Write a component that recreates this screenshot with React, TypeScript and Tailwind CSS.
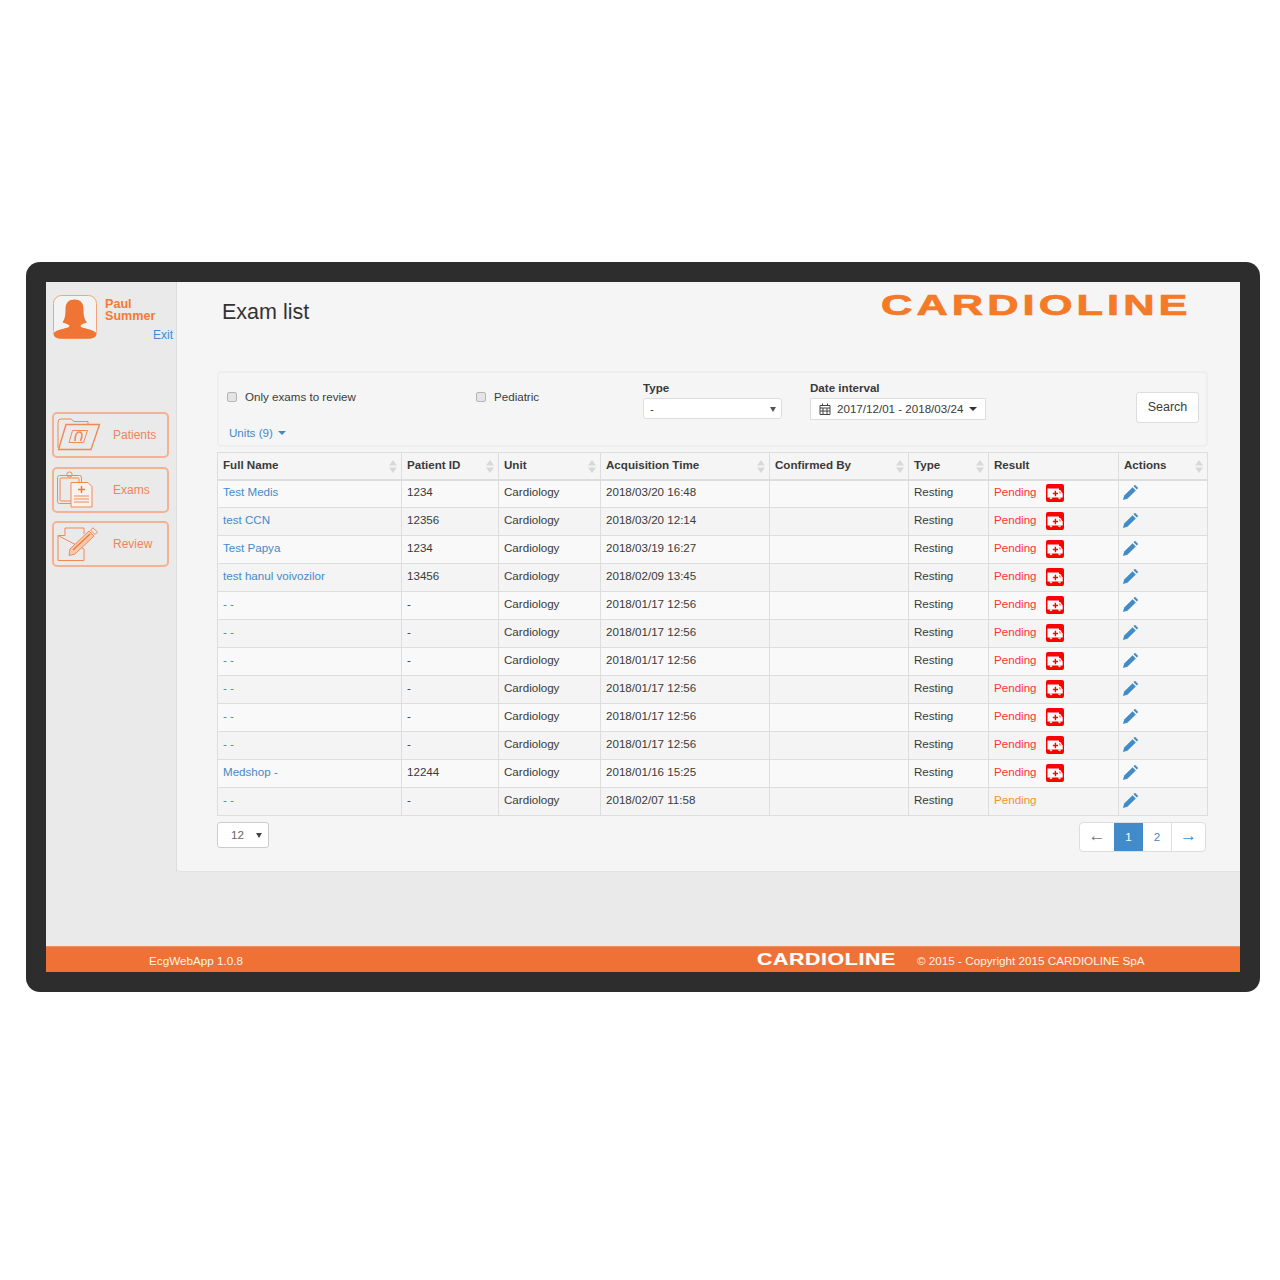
import React from 'react';

const rows = [
  { name: 'Test Medis', id: '1234', time: '2018/03/20 16:48' },
  { name: 'test CCN', id: '12356', time: '2018/03/20 12:14' },
  { name: 'Test Papya', id: '1234', time: '2018/03/19 16:27' },
  { name: 'test hanul voivozilor', id: '13456', time: '2018/02/09 13:45' },
  { name: '- -', id: '-', time: '2018/01/17 12:56' },
  { name: '- -', id: '-', time: '2018/01/17 12:56' },
  { name: '- -', id: '-', time: '2018/01/17 12:56' },
  { name: '- -', id: '-', time: '2018/01/17 12:56' },
  { name: '- -', id: '-', time: '2018/01/17 12:56' },
  { name: '- -', id: '-', time: '2018/01/17 12:56' },
  { name: 'Medshop -', id: '12244', time: '2018/01/16 15:25' },
  { name: '- -', id: '-', time: '2018/02/07 11:58', urgent: false },
];

const columns = [
  { label: 'Full Name', width: 'w-[184px]', sort: true },
  { label: 'Patient ID', width: 'w-[97px]', sort: true },
  { label: 'Unit', width: 'w-[102px]', sort: true },
  { label: 'Acquisition Time', width: 'w-[169px]', sort: true },
  { label: 'Confirmed By', width: 'w-[139px]', sort: true },
  { label: 'Type', width: 'w-[80px]', sort: true },
  { label: 'Result', width: 'w-[130px]', sort: false },
  { label: 'Actions', width: 'w-[89px]', sort: true },
];

const SortIcon = () => (
  <svg width="8" height="13" viewBox="0 0 8 13" className="absolute right-[4px] top-[7px]">
    <path d="M4 0 L8 5.5 H0 Z M4 13 L0 7.5 H8 Z" fill="#d8d8d8" />
  </svg>
);

const Ambulance = () => (
  <svg width="18" height="18" viewBox="0 0 18 18" className="block">
    <rect width="18" height="18" rx="2" fill="#ff0000" />
    <path d="M1.5 4.5 H13 V6 H14.2 L16.7 9.5 V13.5 H1.5 Z" fill="#ffffff" />
    <path d="M8.7 6.8 H10.1 V8.8 H12 V10.2 H10.1 V12.2 H8.7 V10.2 H6.8 V8.8 H8.7 Z" fill="#ff0000" />
    <path d="M13.2 7 H14 L15.4 9.5 H13.2 Z" fill="#ff8080" />
    <circle cx="5" cy="14" r="1.3" fill="#ffd0d0" />
    <circle cx="13.5" cy="14" r="1.3" fill="#ffd0d0" />
  </svg>
);

const PencilIcon = () => (
  <svg width="15" height="15" viewBox="0 0 15 15" className="block">
    <path d="M0 15 L1.2 10.6 L9.6 2.2 L12.8 5.4 L4.4 13.8 Z" fill="#428bca" />
    <path d="M10.6 1.2 L11.6 0.2 Q12 0 12.4 0.2 L14.8 2.6 Q15 3 14.8 3.4 L13.8 4.4 Z" fill="#428bca" />
  </svg>
);

const Avatar = () => (
  <svg width="44" height="44" viewBox="0 0 44 44" className="block">
    <rect x="0.5" y="0.5" width="43" height="43" rx="8" fill="#f3f3f3" stroke="#f2a47c" />
    <path
      d="M12.5 14 C12.5 7.5 16 4.5 21.5 4.5 C27 4.5 30.5 7.5 30.5 14 C30.5 20 31 24 34 27.5 L29.5 29 L27.5 30.5 L28 32 C33 34 41 34.5 43.5 38.5 C43.5 41.5 41 43.5 36 43.5 H8 C3 43.5 0.5 41.5 0.5 38.5 C3 34.5 11 34 16 32 L16.5 30.5 L14 29 L9.5 27.5 C12 24 12.5 20 12.5 14 Z"
      fill="#f07434"
    />
  </svg>
);

const FolderIcon = () => (
  <svg width="44" height="34" viewBox="0 0 44 34" fill="none" stroke="#f08a55" className="block">
    <path d="M1 30 V4 Q1 1 4 1 H14 L17 3.5 H31 V7" strokeWidth="1" />
    <path d="M9 6.5 H42.5 L34 31.5 H1.5 Z" strokeWidth="1.4" />
    <path d="M15.5 12.5 H30.5 L26.5 24.5 H12 Z" strokeWidth="1" />
    <path d="M18 23 C18 16.5 20 14 22.5 14 C25.5 14 25.5 18 23.5 23" strokeWidth="1.6" />
  </svg>
);

const ClipboardIcon = () => (
  <svg width="36" height="37" viewBox="0 0 36 37" fill="none" stroke="#f08a55" className="block">
    <rect x="0.5" y="4.5" width="24" height="28" rx="2" strokeWidth="1" />
    <rect x="3" y="7" width="19" height="23" rx="1" strokeWidth="1" />
    <circle cx="12.5" cy="3.5" r="2.6" strokeWidth="1" />
    <path d="M14 11.5 H31 L35 15.5 V36 H14 Z" fill="#f7f2ef" strokeWidth="1" />
    <path d="M24.5 15 V22 M21 18.5 H28" stroke="#f07434" strokeWidth="1.4" />
    <path d="M17 25 H32 M17 28 H32 M17 31 H32" strokeWidth="1" />
  </svg>
);

const ReviewIcon = () => (
  <svg width="41" height="35" viewBox="0 0 41 35" fill="none" stroke="#f08a55" className="block">
    <path d="M8 1 H27 V7 M27 22 V33.5 H1 V8.5 Z" strokeWidth="1" />
    <path d="M1 8.5 H8 V1" strokeWidth="1" />
    <path d="M13 22 L32 4 L37 9 L18 27 L12 28.5 Z" strokeWidth="1" fill="#f9c9ad" />
    <path d="M16 23 L33 7" stroke="#f07434" strokeWidth="1.2" />
    <path d="M33.5 3 L36 0.8 L40.5 5 L38 7.5 Z" strokeWidth="1" />
  </svg>
);

// natural-size text inside a narrower viewBox, stretched sideways like the wordmark
const Logo = ({ width, height, viewW, size, spacing, weight, color }: { width: number; height: number; viewW: number; size: number; spacing: number; weight: number; color: string }) => (
  <svg width={width} height={height} viewBox={`0 0 ${viewW} ${height}`} preserveAspectRatio="none" className="block overflow-visible">
    <text
      x="0"
      y={height}
      letterSpacing={spacing}
      fontFamily="'Liberation Sans', Arial, sans-serif"
      fontWeight="700"
      fontSize={size}
      fill={color}
      stroke={color}
      strokeWidth={weight}
    >
      CARDIOLINE
    </text>
  </svg>
);

const NavButton = ({ icon, label }: { icon: React.ReactNode; label: string }) => (
  <div className="flex items-center h-[46px] w-[117px] border-2 border-[#f3b293] rounded-[5px] pl-[3px]">
    <div className="w-[56px] flex-shrink-0">{icon}</div>
    <span className="text-[12px] text-[#f0845a]">{label}</span>
  </div>
);

const Caret = ({ className }: { className: string }) => (
  <span className={`inline-block w-0 h-0 border-x-[4px] border-x-transparent border-t-[4px] ${className}`} />
);

export default function App() {
  return (
    <div className="w-[1280px] h-[1280px] bg-white pt-[262px] pl-[26px] font-['Liberation_Sans',Arial,sans-serif] text-[11.6px] text-[#3a3a3a]">
      <div className="w-[1234px] h-[730px] bg-[#2d2d2d] rounded-[14px] p-[20px]">
        <div className="h-[690px] flex flex-col bg-[#eaeaea]">
          <div className="flex h-[664px]">
            {/* Sidebar */}
            <div className="w-[131px] flex-shrink-0 pl-[6px] pt-[13px] border-r border-[#dddddd] h-[590px]">
              <div className="flex h-[117px] pl-[1px]">
                <Avatar />
                <div className="ml-[8px] flex-1 pr-[3px]">
                  <div className="font-bold text-[12.6px] leading-[12px] text-[#f47a33] pt-[3px]">
                    Paul
                    <br />
                    Summer
                  </div>
                  <div className="text-right text-[12px] text-[#428bca] mt-[6px] leading-[14px]">Exit</div>
                </div>
              </div>
              <div className="flex flex-col gap-[8.5px]">
                <NavButton icon={<FolderIcon />} label="Patients" />
                <NavButton icon={<ClipboardIcon />} label="Exams" />
                <NavButton icon={<ReviewIcon />} label="Review" />
              </div>
            </div>

            {/* Main */}
            <div className="w-[1063px] h-[590px] bg-[#f5f5f5] border-b border-[#dfe3e6] rounded-bl-[4px] pl-[40px]">
              <div className="flex h-[89px] pt-[12px]">
                <h1 className="text-[21.5px] leading-[36px] ml-[5px] text-[#333333] w-[659px]">Exam list</h1>
                <Logo width={307} height={21} viewW={205} size={29} spacing={2.7} weight={0.7} color="#f47a28" />
              </div>

              {/* Filters */}
              <div className="relative w-[991px] h-[76px] border-2 border-[#eeeeee] rounded-[4px] flex">
                <div className="w-[424px] flex-shrink-0">
                  <div className="flex items-center h-[17px] mt-[15px] ml-[8px]">
                    <label className="flex items-center gap-[8px] w-[249px]">
                      <input type="checkbox" className="appearance-none w-[10px] h-[10px] rounded-[2px] border border-[#b5b5b5] bg-[#e4e4e4]" />
                      <span>Only exams to review</span>
                    </label>
                    <label className="flex items-center gap-[8px]">
                      <input type="checkbox" className="appearance-none w-[10px] h-[10px] rounded-[2px] border border-[#b5b5b5] bg-[#e4e4e4]" />
                      <span>Pediatric</span>
                    </label>
                  </div>
                  <div className="flex items-center gap-[5px] mt-[19px] ml-[10px] text-[#428bca] leading-[17px]">
                    <span>Units (9)</span>
                    <Caret className="border-t-[#428bca]" />
                  </div>
                </div>
                <div className="w-[167px] flex-shrink-0 pt-[7px]">
                  <div className="font-bold leading-[16px] mb-[2px]">Type</div>
                  <div className="flex items-center justify-between w-[139px] h-[21px] bg-white border border-[#dddddd] rounded-[3px] pl-[6px] pr-[5px]">
                    <span>-</span>
                    <svg width="6" height="6" viewBox="0 0 6 6"><path d="M0 1 H6 L3 6 Z" fill="#555555" /></svg>
                  </div>
                </div>
                <div className="w-[326px] flex-shrink-0 pt-[7px]">
                  <div className="font-bold leading-[16px] mb-[2px]">Date interval</div>
                  <div className="flex items-center w-[176px] h-[22px] bg-white border border-[#dddddd] pl-[8px] gap-[6px]">
                    <svg width="12" height="12" viewBox="0 0 12 12" fill="none" stroke="#444444">
                      <path d="M1 2.5 H11 V11.5 H1 Z M1 5 H11 M4 5 V11.5 M8 5 V11.5 M1 8 H11 M3.5 0.5 V3 M8.5 0.5 V3" strokeWidth="1" />
                    </svg>
                    <span>2017/12/01 - 2018/03/24</span>
                    <Caret className="border-t-[#333333]" />
                  </div>
                </div>
                <div className="pt-[19px]">
                  <div className="flex items-center justify-center w-[63px] h-[31px] bg-white border border-[#dddddd] rounded-[3px] text-[12.5px]">
                    Search
                  </div>
                </div>
              </div>

              {/* Exams table */}
              <table className="mt-[5px] w-[990px] table-fixed border-collapse">
                <thead>
                  <tr className="h-[27px]">
                    {columns.map(col => (
                      <th key={col.label} className={`relative ${col.width} border border-b-2 border-[#dddddd] text-left font-bold pl-[5px] pt-0 pb-[2px]`}>
                        {col.label}
                        {col.sort && <SortIcon />}
                      </th>
                    ))}
                  </tr>
                </thead>
                <tbody>
                  {rows.map((row, i) => {
                    const cell = `border border-[#dddddd] pl-[5px] ${i === 0 ? 'pb-[5px]' : 'pb-[3px]'}`;
                    return (
                      <tr key={i} className={`h-[28px] ${i % 2 === 0 ? 'bg-[#f9f9f9]' : 'bg-[#f4f4f4]'}`}>
                        <td className={`${cell} text-[#428bca]`}>{row.name}</td>
                        <td className={cell}>{row.id}</td>
                        <td className={cell}>Cardiology</td>
                        <td className={cell}>{row.time}</td>
                        <td className={cell}></td>
                        <td className={cell}>Resting</td>
                        <td className="border border-[#dddddd] pl-[5px] pb-[2px]">
                          {row.urgent === false ? (
                            <span className="text-[#f0932b] relative top-[-1px]">Pending</span>
                          ) : (
                            <div className="flex items-center gap-[9px]">
                              <span className="text-[#ff3333] relative top-[-1px]">Pending</span>
                              <Ambulance />
                            </div>
                          )}
                        </td>
                        <td className="border border-[#dddddd] pl-[4px] pb-[3px]">
                          <PencilIcon />
                        </td>
                      </tr>
                    );
                  })}
                </tbody>
              </table>

              {/* Page size and pager */}
              <div className="flex justify-between w-[989px] mt-[6px]">
                <div className="flex items-center justify-between w-[52px] h-[26px] bg-white border border-[#cccccc] rounded-[3px] pl-[13px] pr-[6px] pb-[1px] text-[#666666]">
                  <span>12</span>
                  <svg width="6" height="6" viewBox="0 0 6 6"><path d="M0 1 H6 L3 6 Z" fill="#444444" /></svg>
                </div>
                <div className="flex h-[30px] bg-white border border-[#dddddd] rounded-[4px] overflow-hidden">
                  <div className="flex items-center justify-center w-[34px] pb-[3px] text-[#777777] text-[17px] leading-none">←</div>
                  <div className="flex items-center justify-center w-[29px] bg-[#428bca] text-white">1</div>
                  <div className="flex items-center justify-center w-[29px] border-r border-[#dddddd] text-[#428bca]">2</div>
                  <div className="flex items-center justify-center w-[33px] pb-[3px] text-[#428bca] text-[17px] leading-none">→</div>
                </div>
              </div>
            </div>
          </div>

          {/* Footer */}
          <div className="flex items-center h-[26px] bg-[#ef7135] text-[#fff3ea] text-[11.7px] border-t border-[#f08c5e] pl-[103px] pt-[3px]">
            <span className="w-[608px]">EcgWebApp 1.0.8</span>
            <div className="mb-[5px]">
              <Logo width={138} height={12} viewW={110} size={17} spacing={0.5} weight={0.2} color="#ffffff" />
            </div>
            <span className="ml-[22px]">© 2015 - Copyright 2015 CARDIOLINE SpA</span>
          </div>
        </div>
      </div>
    </div>
  );
}
